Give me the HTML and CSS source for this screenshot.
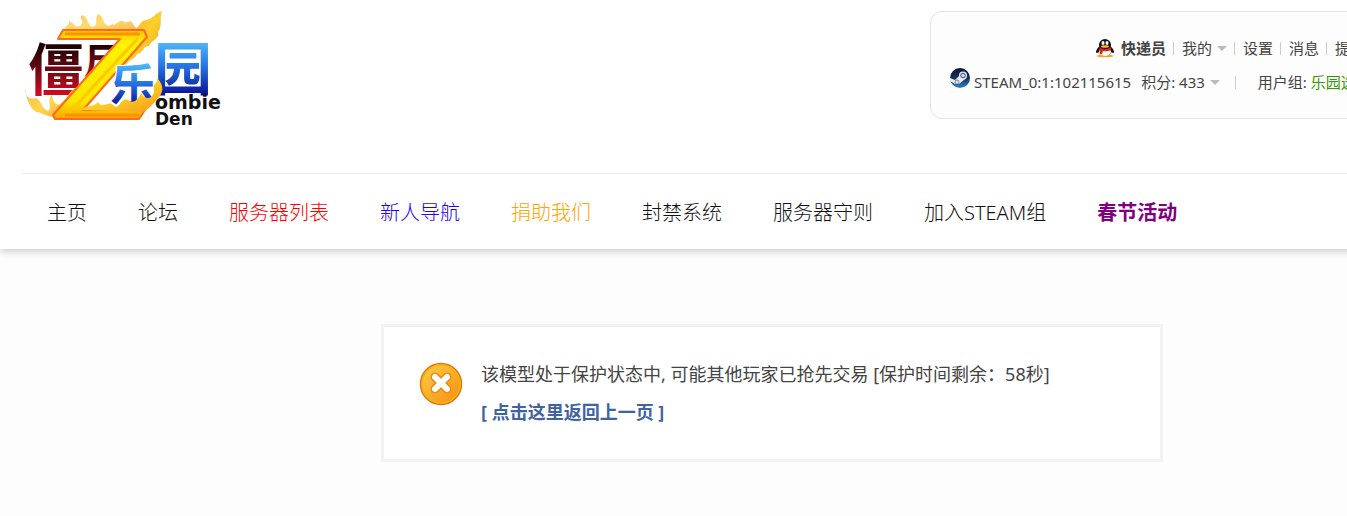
FILE: index.html
```html
<!DOCTYPE html>
<html lang="zh-CN">
<head>
<meta charset="utf-8">
<title>僵尸乐园</title>
<link rel="stylesheet" href="styles.css">
</head>
<body>
<div class="page">
<header class="header">
  <div class="top">
    <a class="logo" href="#" aria-label="僵尸乐园 Zombie Den">
      <svg width="204" height="124" viewBox="0 0 204 124">
        <defs>
          <linearGradient id="red" x1="0" y1="0" x2="0" y2="1"><stop offset=".2" stop-color="#100000"/><stop offset=".5" stop-color="#5d0910"/><stop offset=".85" stop-color="#d00a20"/></linearGradient>
          <linearGradient id="blue" x1="0" y1="0" x2="0" y2="1"><stop offset=".15" stop-color="#5cc8ff"/><stop offset=".5" stop-color="#2878e4"/><stop offset=".9" stop-color="#06068c"/></linearGradient>
          <linearGradient id="fire" x1="0" y1="0" x2="1" y2="1"><stop offset="0" stop-color="#f6a93a"/><stop offset=".5" stop-color="#ffcf2a"/><stop offset="1" stop-color="#f39a12"/></linearGradient>
          <linearGradient id="zed" x1="0" y1="0" x2="0" y2="1"><stop offset="0" stop-color="#ffc400"/><stop offset=".15" stop-color="#fff200"/><stop offset=".8" stop-color="#ffe600"/><stop offset="1" stop-color="#ffa200"/></linearGradient>
        </defs>
        <g class="logo-red"><text x="7" y="83" font-size="56" fill="url(#red)">僵</text><text x="63" y="68" font-size="38" fill="url(#red)">尸</text></g>
        <g fill="url(#fire)">
          <path opacity=".7" d="M44 23C43 17 49 20 48 14C53 16 55 22 60 18C64 14 57 11 61 8C68 11 66 18 72 20C78 18 73 11 77 7C84 10 81 18 88 19C94 15 92 20 96 16C103 10 101 18 110 14L117 24Z"/>
          <path d="M112 23C119 21 118 14 125 13C132 12 134 6 141 4C138 12 142 18 137 25C139 32 130 33 128 39C122 38 123 46 116 47C114 53 109 51 104 59C101 57 111 43 114 37Z"/>
          <path opacity=".85" d="M4 81C3 90 10 93 15 91C21 94 20 101 27 104C32 101 25 94 31 88C33 99 38 100 43 93C47 91 48 83 55 81L37 109C27 112 22 105 15 105C10 102 5 93 4 81Z"/>
          <path d="M68 80C72 72 69 65 76 58L88 50C85 58 79 62 78 70Z" opacity=".8"/>
        </g>
        <path d="M42 23H123L126 30L62 103H124L118 112H34L32 108L99 32H37Z" fill="url(#zed)" stroke="#ff6a20" stroke-width="2" stroke-linejoin="round"/>
        <path d="M44 27H119M44 108H118" fill="none" stroke="#ff9000" stroke-width="3"/>
        <path d="M117 31L48 106" fill="none" stroke="#ffc800" stroke-width="3"/>
        <g class="logo-blue"><text x="89" y="95" font-size="46" fill="url(#blue)">乐</text><text x="133" y="83" font-size="58" fill="url(#blue)">园</text></g>
        <path d="M60 103C66 97 72 101 77 95C82 103 88 92 93 99C99 103 100 89 107 93C113 98 118 91 120 86C124 95 134 91 133 82C131 76 138 76 136 71C144 79 142 86 137 91C131 98 127 103 122 105Z" fill="url(#fire)"/>
        <g class="logo-latin"><text x="134" y="102" font-size="19">ombie</text><text x="134" y="118" font-size="17">Den</text></g>
      </svg>
    </a>
    <div class="user">
      <div class="row row-links">
        <svg class="qq" width="20" height="20" viewBox="0 0 20 20"><path d="M5 8C1 11 0 15 2 15L6 13ZM15 8C19 11 20 15 18 15L14 13Z" fill="#111"/><path d="M1 18Q10 14 19 18Q14 20 10 19Q6 20 1 18Z" fill="#f6a21a"/><ellipse cx="10" cy="12" rx="7" ry="6" fill="#111"/><ellipse cx="10" cy="14" rx="6" ry="4" fill="#fff"/><ellipse cx="10" cy="7" rx="6" ry="6" fill="#111"/><ellipse cx="8" cy="5" rx="1.500" ry="2" fill="#fff"/><ellipse cx="12" cy="5" rx="1.500" ry="2" fill="#fff"/><ellipse cx="10" cy="8.500" rx="4" ry="1.300" fill="#fb2"/><path d="M4 9Q10 13 16 9V12Q12 14 8 13L7 16H5V12Z" fill="#e3211c"/></svg>
        <a class="name" href="#">快递员</a><i class="bar"></i><a class="drop" href="#">我的</a><i class="bar"></i><a href="#">设置</a><i class="bar"></i><a href="#">消息</a><i class="bar"></i><a href="#">提醒</a>
      </div>
      <div class="row">
        <svg class="steam" width="20" height="20" viewBox="0 0 20 20"><defs><linearGradient id="st" x1="0" y1="0" x2="0" y2="1"><stop offset="0" stop-color="#0b1535"/><stop offset=".5" stop-color="#15305e"/><stop offset="1" stop-color="#2a88c0"/></linearGradient></defs><circle cx="10" cy="10" r="10" fill="url(#st)"/><path d="M0 10L5 12L9 8L15 11L9 16L5 16L0 13Z" fill="#e8ecf2"/><circle cx="13" cy="7.500" r="4" fill="#e8ecf2"/><circle cx="13" cy="7.500" r="2.300" fill="#cdd5e2" stroke="#3a4c70"/><circle cx="7" cy="14" r="2" fill="none" stroke="#6c7c9a"/></svg>
        <span class="sid">STEAM_0:1:102115615</span>
        <a class="drop" href="#">积分: 433</a><i class="bar bar-wide"></i><span>用户组: <a class="group" href="#">乐园选民</a></span>
      </div>
    </div>
  </div>
  <nav class="nav">
    <a href="#">主页</a><a href="#">论坛</a><a class="red" href="#">服务器列表</a><a class="blue" href="#">新人导航</a><a class="orange" href="#">捐助我们</a><a href="#">封禁系统</a><a href="#">服务器守则</a><a href="#">加入STEAM组</a><a class="purple" href="#">春节活动</a>
  </nav>
</header>
<main class="main">
  <section class="message">
    <svg width="44" height="44" viewBox="0 0 44 44"><defs><linearGradient id="or" x1="0" y1="0" x2="1" y2="1"><stop offset="0" stop-color="#fbd04c"/><stop offset=".5" stop-color="#fbae2b"/><stop offset="1" stop-color="#f98a10"/></linearGradient></defs><circle cx="22" cy="22" r="20.500" fill="url(#or)" stroke="#dc7418" stroke-width="1.500"/><circle cx="22" cy="22" r="19" fill="none" stroke="#f5b40a" stroke-width="1.500"/><path d="M16 15L28 27M28 15L16 27" stroke="#ef8a0c" stroke-width="9" stroke-linecap="round"/><path d="M16 15L28 27M28 15L16 27" stroke="#fff" stroke-width="6" stroke-linecap="round"/></svg>
    <div>
      <p>该模型处于保护状态中, 可能其他玩家已抢先交易 [保护时间剩余：58秒]</p>
      <p><a class="back" href="#">[ 点击这里返回上一页 ]</a></p>
    </div>
  </section>
</main>
</div>
</body>
</html>
```
FILE: styles.css
```css
* { box-sizing: border-box; }
body { margin: 0; overflow-x: hidden; background: #fdfdfd; color: #444; font-family: "Noto Sans", "Noto Sans CJK SC", sans-serif; }
a { color: inherit; text-decoration: none; }
p { margin: 0; }
svg { display: block; flex: none; }
.page { min-width: 1544px; }
.header { padding: 0 21px; background: #fff; box-shadow: 0 3px 7px rgba(0, 0, 0, .18); }
.top { display: flex; justify-content: space-between; align-items: flex-start; padding: 7px 0 42px; }
.logo-red, .logo-blue { font-family: "Noto Sans CJK SC", sans-serif; font-weight: 700; stroke: #fff; stroke-width: 2px; paint-order: stroke; }
.logo-latin { font-family: "DejaVu Sans", sans-serif; font-weight: 700; fill: #111; }
.user { flex: none; width: 593px; margin-top: 4px; padding: 19px; border: 1px solid #e3e3e3; border-radius: 12px; background: #fdfdfd; font-size: 15px; line-height: 34px; white-space: nowrap; }
.row { display: flex; align-items: center; height: 34px; }
.row-links { padding-left: 145px; }
.bar { flex: none; width: 1px; height: 13px; margin: 0 8px 0 7px; background: #ccc; }
.bar-wide { margin: 0 22px 0 15px; }
.qq { margin-right: 6px; }
.steam { margin: 0 4px 8px 0; }
.name { font-weight: 700; }
.sid { margin-right: 10px; }
.drop { display: flex; align-items: center; }
.drop::after { content: ""; margin-left: 5px; border: 5px solid transparent; border-top-color: #bbb; border-bottom: 0; }
.group { color: #390; }
.nav { display: flex; gap: 51px; padding: 2px 26px 0; border-top: 1px solid #eee; color: #111; font-size: 20px; font-weight: 300; line-height: 73px; white-space: nowrap; }
.red { color: #f00; }
.blue { color: #20f; }
.orange { color: #ffa500; }
.purple { color: #800080; font-weight: 700; }
.main { padding: 75px 16px 54px; }
.message { display: flex; gap: 18px; max-width: 782px; margin: 0 auto; padding: 28px 35px; border: 3px solid #f2f2f2; background: #fff; font-size: 18px; line-height: 38px; }
.message > svg { margin-top: 7px; }
.back { color: #3f64a0; font-weight: 700; }
```
